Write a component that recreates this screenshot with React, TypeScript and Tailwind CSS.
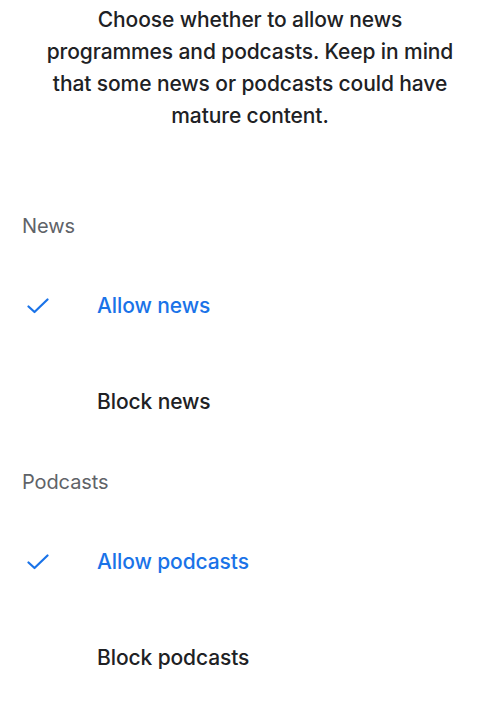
import React from "react";

const sections = [
  {
    title: "News",
    options: [
      { label: "Allow news", selected: true },
      { label: "Block news", selected: false },
    ],
  },
  {
    title: "Podcasts",
    options: [
      { label: "Allow podcasts", selected: true },
      { label: "Block podcasts", selected: false },
    ],
  },
];

const introLines = [
  "Choose whether to allow news",
  "programmes and podcasts. Keep in mind",
  "that some news or podcasts could have",
  "mature content.",
];

function Check() {
  return (
    <svg width="22" height="16" viewBox="0 0 22 16" fill="none">
      <path
        d="M1.5 8.5 L7.5 14 L20.5 1.5"
        stroke="#1a73e8"
        strokeWidth="2.2"
        strokeLinecap="round"
        strokeLinejoin="round"
      />
    </svg>
  );
}

export default function App() {
  return (
    <div className="w-[500px] h-[703px] bg-white font-['Inter',sans-serif] overflow-hidden">
      {/* Intro */}
      <p className="pt-[4px] text-center text-[21px] leading-[32px] font-medium text-[#202124] tracking-[-0.1px]">
        {introLines.map((line) => (
          <span key={line} className="block whitespace-nowrap">
            {line}
          </span>
        ))}
      </p>

      <div className="pt-[78px]">
        {sections.map((section) => (
          <div key={section.title}>
            <div className="px-[22px] h-[32px] flex items-center text-[20px] text-[#5f6368] tracking-[-0.1px]">
              {section.title}
            </div>
            {section.options.map((opt, i) => (
              <div
                key={opt.label}
                className={`flex items-center ${i === 0 ? "mt-[48px]" : "mt-[64px]"} h-[32px]`}
              >
                <div className="w-[97px] pl-[27px] flex items-center">
                  {opt.selected && <Check />}
                </div>
                <span
                  className={`text-[21px] font-medium tracking-[-0.1px] ${
                    opt.selected ? "text-[#1a73e8]" : "text-[#202124]"
                  }`}
                >
                  {opt.label}
                </span>
              </div>
            ))}
            <div className="h-[48px]" />
          </div>
        ))}
      </div>
    </div>
  );
}
